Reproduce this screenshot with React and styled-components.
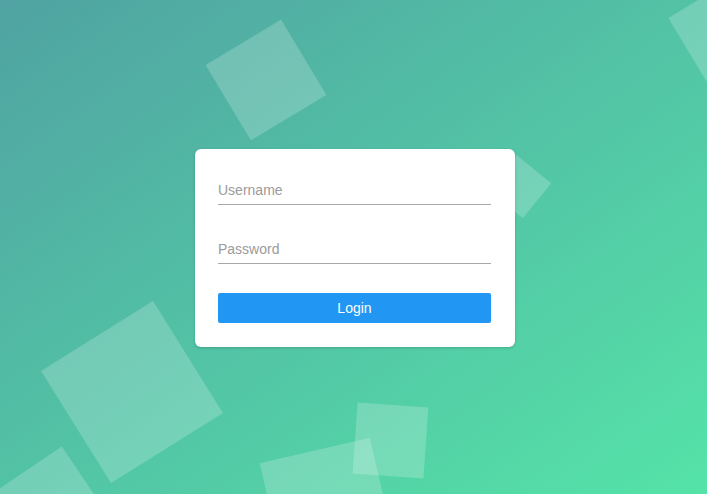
import React from "react";
import styled, { createGlobalStyle } from "styled-components";

const GlobalStyle = createGlobalStyle`
  html, body { margin: 0; padding: 0; height: 100%; }
  body { font-family: "Liberation Sans", Arial, sans-serif; }
  #root { height: 100%; }
  * { box-sizing: border-box; }
`;

const Page = styled.div`
  position: relative;
  width: 100%;
  height: 100vh;
  overflow: hidden;
  background: linear-gradient(to bottom right, #50a3a2 0%, #55e3a8 100%);
  display: flex;
  align-items: center;
  justify-content: center;
  padding: 2px 0 0 3px;
`;

const BgSquare = styled.div`
  position: absolute;
  width: ${(p) => p.$size}px;
  height: ${(p) => p.$size}px;
  left: ${(p) => p.$cx - p.$size / 2}px;
  top: ${(p) => p.$cy - p.$size / 2}px;
  transform: rotate(${(p) => p.$rot}deg);
  background: rgba(255, 255, 255, 0.2);
`;

const Card = styled.form`
  position: relative;
  z-index: 1;
  width: 320px;
  background: #fff;
  border-radius: 6px;
  box-shadow: 0 1px 3px rgba(0, 0, 0, 0.18);
  padding: 26px 24px 24px 23px;
  display: flex;
  flex-direction: column;
  gap: 29px;
`;

const Field = styled.input`
  display: block;
  width: 100%;
  height: 30px;
  border: none;
  border-bottom: 1px solid #a8a8a8;
  outline: none;
  padding: 0;
  font-family: "Liberation Sans", Arial, sans-serif;
  font-size: 14px;
  color: #333;
  background: transparent;
  &::placeholder {
    color: #9b9b9b;
  }
`;

const LoginButton = styled.button`
  display: block;
  width: 100%;
  height: 30px;
  border: none;
  border-radius: 2px;
  background: #2196f3;
  color: #fff;
  font-family: "Liberation Sans", Arial, sans-serif;
  font-size: 14px;
  cursor: pointer;
  padding: 0;
`;

const squares = [
  { size: 88, cx: 266, cy: 80, rot: -31 },
  { size: 132, cx: 132, cy: 392, rot: -32 },
  { size: 80, cx: 51, cy: 502, rot: -34 },
  { size: 45, cx: 519, cy: 186, rot: 39 },
  { size: 71, cx: 390, cy: 440, rot: 4 },
  { size: 113, cx: 327, cy: 505, rot: -13 },
  { size: 100, cx: 737, cy: 35, rot: -31 },
];

export default function App() {
  return (
    <>
      <GlobalStyle />
      <Page>
        {squares.map((s, i) => (
          <BgSquare key={i} $size={s.size} $cx={s.cx} $cy={s.cy} $rot={s.rot} />
        ))}
        <Card onSubmit={(e) => e.preventDefault()}>
          <Field type="text" placeholder="Username" />
          <Field type="password" placeholder="Password" />
          <LoginButton type="submit">Login</LoginButton>
        </Card>
      </Page>
    </>
  );
}
